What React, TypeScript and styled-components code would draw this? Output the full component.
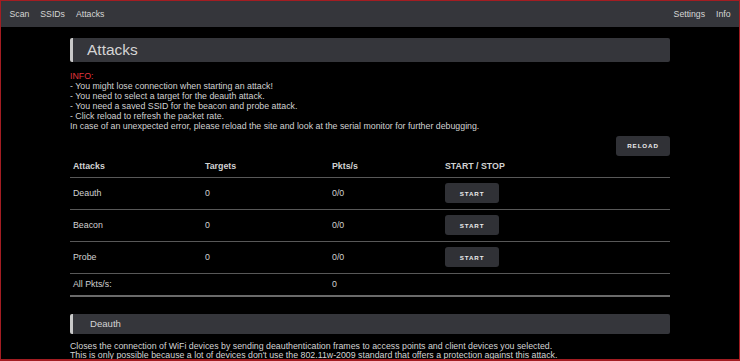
import React from 'react'
import styled, { createGlobalStyle } from 'styled-components'

const GlobalStyle = createGlobalStyle`
  html, body {
    margin: 0;
    padding: 0;
    background: #000;
  }
  body {
    font-family: "Liberation Sans", Arial, sans-serif;
    color: #c4c4c4;
  }
`

const attacks = [
  { name: 'Deauth', targets: 0, pkts: '0/0' },
  { name: 'Beacon', targets: 0, pkts: '0/0' },
  { name: 'Probe', targets: 0, pkts: '0/0' },
]

const App: React.FC = () => {
  return (
    <>
      <GlobalStyle />
      <StyledFrame>
        <StyledNav>
          <StyledNavGroup>
            <StyledNavLink>Scan</StyledNavLink>
            <StyledNavLink>SSIDs</StyledNavLink>
            <StyledNavLink>Attacks</StyledNavLink>
          </StyledNavGroup>
          <StyledNavGroup>
            <StyledNavLink>Settings</StyledNavLink>
            <StyledNavLink>Info</StyledNavLink>
          </StyledNavGroup>
        </StyledNav>

        <StyledContainer>
          <StyledHeading>Attacks</StyledHeading>

          <StyledInfo>
            <StyledInfoLabel>INFO:</StyledInfoLabel>
            <div>- You might lose connection when starting an attack!</div>
            <div>- You need to select a target for the deauth attack.</div>
            <div>- You need a saved SSID for the beacon and probe attack.</div>
            <div>- Click reload to refresh the packet rate.</div>
            <div>In case of an unexpected error, please reload the site and look at the serial monitor for further debugging.</div>
          </StyledInfo>

          <StyledReloadRow>
            <StyledButton>RELOAD</StyledButton>
          </StyledReloadRow>

          <StyledTable>
            <StyledHeadRow>
              <StyledCell>Attacks</StyledCell>
              <StyledCell>Targets</StyledCell>
              <StyledCell>Pkts/s</StyledCell>
              <StyledCell>START / STOP</StyledCell>
            </StyledHeadRow>
            {attacks.map(a => (
              <StyledRow key={a.name}>
                <StyledCell>{a.name}</StyledCell>
                <StyledCell>{a.targets}</StyledCell>
                <StyledCell>{a.pkts}</StyledCell>
                <StyledCell>
                  <StyledButton>START</StyledButton>
                </StyledCell>
              </StyledRow>
            ))}
            <StyledTotalRow>
              <StyledCell>All Pkts/s:</StyledCell>
              <StyledCell />
              <StyledCell>0</StyledCell>
              <StyledCell />
            </StyledTotalRow>
          </StyledTable>

          <StyledSubHeading>Deauth</StyledSubHeading>
          <StyledDescription>
            <div>Closes the connection of WiFi devices by sending deauthentication frames to access points and client devices you selected.</div>
            <div>This is only possible because a lot of devices don't use the 802.11w-2009 standard that offers a protection against this attack.</div>
          </StyledDescription>
        </StyledContainer>
      </StyledFrame>
    </>
  )
}

const StyledFrame = styled.div`
  box-sizing: border-box;
  width: 740px;
  height: 361px;
  overflow: hidden;
  border: 1px solid #a31d22;
  border-bottom-width: 2px;
  background: #000;
`

const StyledNav = styled.div`
  display: flex;
  justify-content: space-between;
  align-items: center;
  height: 26px;
  padding: 0 3px;
  background: #35363b;
`

const StyledNavGroup = styled.div`
  display: flex;
`

const StyledNavLink = styled.span`
  padding: 0 5.5px;
  font-size: 8.7px;
  color: #d6d6d6;
`

const StyledContainer = styled.div`
  width: 600px;
  margin: 0 auto;
`

const StyledHeading = styled.div`
  display: flex;
  align-items: center;
  height: 24px;
  margin-top: 11px;
  padding-left: 14px;
  border-left: 3px solid #c9c9c9;
  border-radius: 2px;
  background: #35363b;
  font-size: 15.5px;
  color: #d4d4d4;
`

const StyledSubHeading = styled(StyledHeading)`
  height: 20px;
  margin-top: 17px;
  padding-left: 17px;
  font-size: 9.6px;
`

const StyledInfo = styled.div`
  margin-top: 9px;
  font-size: 8.8px;
  line-height: 10.1px;
  color: #d2d2d2;
`

const StyledInfoLabel = styled.div`
  color: #e0353c;
`

const StyledReloadRow = styled.div`
  display: flex;
  justify-content: flex-end;
  margin-top: 4px;
`

const StyledButton = styled.div`
  display: flex;
  align-items: center;
  justify-content: center;
  width: 54px;
  height: 20px;
  border-radius: 3px;
  background: #303136;
  font-size: 6.2px;
  font-weight: 700;
  letter-spacing: 0.9px;
  color: #ececec;
`

const StyledTable = styled.div`
  display: flex;
  flex-direction: column;
`

const StyledRow = styled.div`
  display: grid;
  grid-template-columns: 132px 127px 113px 1fr;
  align-items: center;
  height: 32px;
  box-sizing: border-box;
  border-bottom: 1px solid #585858;
  font-size: 8.8px;
  color: #d2d2d2;
`

const StyledHeadRow = styled(StyledRow)`
  height: 22px;
  font-weight: 700;
  color: #d2d2d2;
`

const StyledTotalRow = styled(StyledRow)`
  height: 23px;
  border-bottom: 2px solid #6a6a6a;
`

const StyledCell = styled.div`
  padding-left: 3px;
`

const StyledDescription = styled.div`
  margin-top: 8px;
  font-size: 8.8px;
  line-height: 9px;
  color: #d4d4d4;
`

export default App
